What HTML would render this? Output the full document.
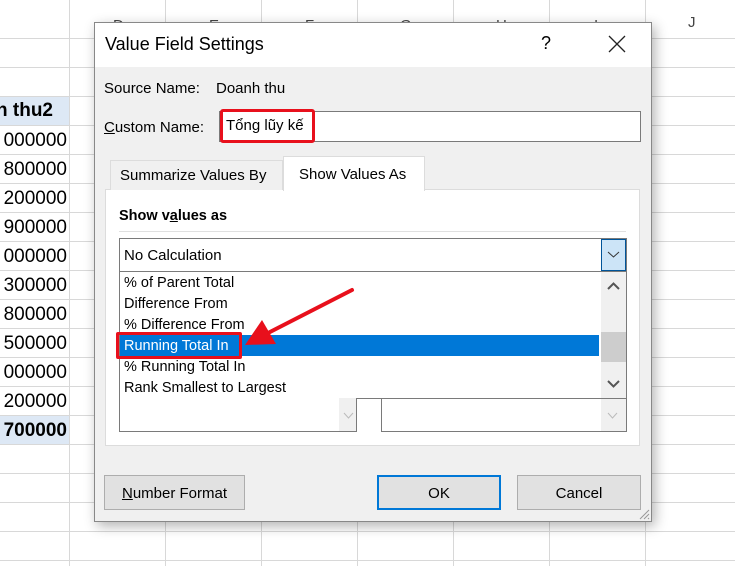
<!DOCTYPE html>
<html><head><style>
body{margin:0;width:735px;height:566px;overflow:hidden;background:#fff;font-family:"Liberation Sans",sans-serif;position:relative}
.a{position:absolute}
.hl{position:absolute;left:0;width:735px;height:1px;background:#d8d8d8}
.vl{position:absolute;top:0;height:566px;width:1px;background:#d8d8d8}
.num{position:absolute;left:-8px;width:75px;text-align:right;font-size:19px;color:#000;height:28px;line-height:28px}
.t{position:absolute;font-size:15px;color:#000;white-space:nowrap}
.li{position:absolute;left:124px;font-size:14.5px;white-space:nowrap}
.btn{position:absolute;background:#e1e1e1;border:1px solid #adadad;box-sizing:border-box;text-align:center;line-height:35px;font-size:15px}
</style></head><body>
<div class="hl" style="top:38px"></div>
<div class="hl" style="top:67px"></div><div class="hl" style="top:96px"></div><div class="hl" style="top:125px"></div><div class="hl" style="top:154px"></div><div class="hl" style="top:183px"></div><div class="hl" style="top:212px"></div><div class="hl" style="top:241px"></div><div class="hl" style="top:270px"></div><div class="hl" style="top:299px"></div><div class="hl" style="top:328px"></div><div class="hl" style="top:357px"></div><div class="hl" style="top:386px"></div><div class="hl" style="top:415px"></div><div class="hl" style="top:444px"></div><div class="hl" style="top:473px"></div><div class="hl" style="top:502px"></div><div class="hl" style="top:531px"></div><div class="hl" style="top:560px"></div>
<div class="vl" style="left:69px"></div><div class="vl" style="left:165px"></div><div class="vl" style="left:261px"></div><div class="vl" style="left:357px"></div><div class="vl" style="left:453px"></div><div class="vl" style="left:549px"></div><div class="vl" style="left:645px"></div>
<div class="a" style="left:0;top:97px;width:69px;height:28px;background:#dde8f5"></div>
<div class="a" style="left:0;top:416px;width:69px;height:28px;background:#dde8f5"></div>
<div class="num" style="top:97px;font-weight:bold;text-align:left;left:-4px">h thu2</div>
<div class="num" style="top:127px">000000</div><div class="num" style="top:156px">800000</div><div class="num" style="top:185px">200000</div><div class="num" style="top:214px">900000</div><div class="num" style="top:243px">000000</div><div class="num" style="top:272px">300000</div><div class="num" style="top:301px">800000</div><div class="num" style="top:330px">500000</div><div class="num" style="top:359px">000000</div><div class="num" style="top:388px">200000</div><div class="num" style="top:417px;font-weight:bold">700000</div>
<div class="t" style="left:688px;top:14px;color:#444">J</div>
<div class="t" style="left:113px;top:17px;color:#444">D</div><div class="t" style="left:209px;top:17px;color:#444">E</div><div class="t" style="left:305px;top:17px;color:#444">F</div><div class="t" style="left:400px;top:17px;color:#444">G</div><div class="t" style="left:496px;top:17px;color:#444">H</div><div class="t" style="left:594px;top:17px;color:#444">I</div>

<div class="a" style="left:94px;top:22px;width:558px;height:500px;background:#f0f0f0;border:1px solid #888;box-sizing:border-box;box-shadow:3px 4px 12px rgba(0,0,0,.3)">
<div class="a" style="left:0;top:0;width:556px;height:44px;background:#fff"></div>
</div>
<div class="t" style="left:105px;top:34px;font-size:18px">Value Field Settings</div>
<div class="t" style="left:541px;top:33px;font-size:18px">?</div>
<svg class="a" style="left:608px;top:35px" width="18" height="18"><path d="M1 1L17 17M17 1L1 17" stroke="#222" stroke-width="1.3"/></svg>
<div class="t" style="left:104px;top:80px">Source Name:</div>
<div class="t" style="left:216px;top:80px">Doanh thu</div>
<div class="t" style="left:104px;top:119px"><u>C</u>ustom Name:</div>
<div class="a" style="left:219px;top:111px;width:422px;height:31px;background:#fff;border:1px solid #7a7a7a;box-sizing:border-box"></div>
<div class="a" style="left:220px;top:109px;width:95px;height:34px;border:3px solid #e8101c;border-radius:3px;box-sizing:border-box"></div>
<div class="t" style="left:226px;top:117px">Tổng lũy kế</div>
<div class="a" style="left:105px;top:189px;width:535px;height:257px;background:#fff;border:1px solid #dcdcdc;box-sizing:border-box"></div>
<div class="a" style="left:110px;top:160px;width:173px;height:30px;border:1px solid #dcdcdc;border-bottom:none;box-sizing:border-box;background:#f0f0f0"></div>
<div class="a" style="left:283px;top:156px;width:142px;height:35px;border:1px solid #dcdcdc;border-bottom:none;box-sizing:border-box;background:#fff"></div>
<div class="t" style="left:120px;top:167px">Summarize Values By</div>
<div class="t" style="left:299px;top:166px">Show Values As</div>
<div class="t" style="left:119px;top:208px;font-weight:bold;font-size:14.5px">Show v<u>a</u>lues as</div>
<div class="a" style="left:119px;top:231px;width:507px;height:1px;background:#e0e0e0"></div>
<div class="a" style="left:119px;top:238px;width:508px;height:34px;border:1px solid #7a7a7a;box-sizing:border-box;background:#fff"></div>
<div class="t" style="left:124px;top:247px">No Calculation</div>
<div class="a" style="left:601px;top:239px;width:25px;height:32px;background:#cce4f7;border:1px solid #005499;box-sizing:border-box"></div>
<svg class="a" style="left:607px;top:251px" width="13" height="8"><path d="M1 1L6.5 6L12 1" stroke="#333" fill="none"/></svg>
<div class="a" style="left:119px;top:271px;width:508px;height:128px;border:1px solid #7a7a7a;box-sizing:border-box;background:#fff"></div>
<div class="a" style="left:601px;top:272px;width:25px;height:126px;background:#f0f0f0"></div>
<div class="a" style="left:601px;top:332px;width:25px;height:30px;background:#cdcdcd"></div>
<svg class="a" style="left:607px;top:282px" width="13" height="8"><path d="M1 7L6.5 1.5L12 7" stroke="#555" stroke-width="2" fill="none"/></svg>
<svg class="a" style="left:607px;top:380px" width="13" height="8"><path d="M1 1L6.5 6.5L12 1" stroke="#555" stroke-width="2" fill="none"/></svg>
<div class="a" style="left:120px;top:335px;width:479px;height:21px;background:#0078d7"></div>
<div class="li" style="top:275px">% of Parent Total</div>
<div class="li" style="top:296px">Difference From</div>
<div class="li" style="top:317px">% Difference From</div>
<div class="li" style="top:338px;color:#fff">Running Total In</div>
<div class="li" style="top:359px">% Running Total In</div>
<div class="li" style="top:380px">Rank Smallest to Largest</div>
<div class="a" style="left:116px;top:332px;width:126px;height:27px;border:3px solid #e8101c;border-radius:2px;box-sizing:border-box"></div>
<svg class="a" style="left:0;top:0" width="735" height="566"><path d="M352 290L268 333" stroke="#e8101c" stroke-width="4" stroke-linecap="round"/><path d="M245 345L262 320L276 344Z" fill="#e8101c"/></svg>
<div class="a" style="left:119px;top:398px;width:238px;height:34px;border:1px solid #7a7a7a;border-top:none;box-sizing:border-box;background:#fff"></div>
<div class="a" style="left:339px;top:398px;width:17px;height:33px;background:#f0f0f0"></div>
<svg class="a" style="left:343px;top:412px" width="11" height="7"><path d="M1 1L5.5 6L10 1" stroke="#bbb" fill="none"/></svg>
<div class="a" style="left:381px;top:398px;width:246px;height:34px;border:1px solid #7a7a7a;box-sizing:border-box;background:#fff"></div>
<div class="a" style="left:601px;top:399px;width:25px;height:32px;background:#f0f0f0"></div>
<svg class="a" style="left:607px;top:412px" width="11" height="7"><path d="M1 1L5.5 6L10 1" stroke="#bbb" fill="none"/></svg>
<div class="btn" style="left:104px;top:475px;width:141px;height:35px"><u>N</u>umber Format</div>
<div class="btn" style="left:377px;top:475px;width:124px;height:35px;border:2px solid #0078d7;line-height:33px">OK</div>
<div class="btn" style="left:517px;top:475px;width:124px;height:35px">Cancel</div>
<svg class="a" style="left:638px;top:508px" width="12" height="12"><path d="M11 2L2 11M11 6L6 11M11 10L10 11" stroke="#999"/></svg>
</body></html>
